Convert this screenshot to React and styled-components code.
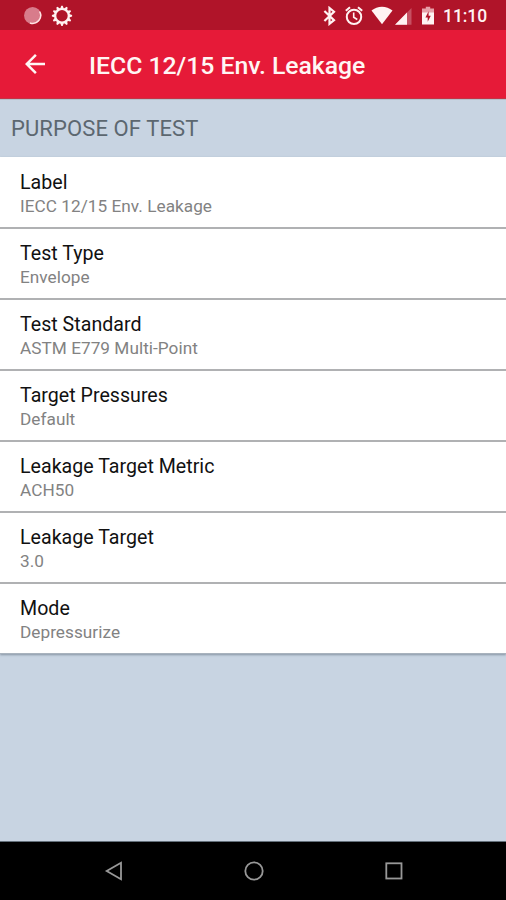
import React from 'react';
import styled, { createGlobalStyle } from 'styled-components';

const GlobalStyle = createGlobalStyle`
  * {
    box-sizing: border-box;
  }
  body {
    margin: 0;
    font-family: Roboto, "Liberation Sans", sans-serif;
  }
`;

const Screen = styled.div`
  display: flex;
  flex-direction: column;
  width: 100%;
  height: 100vh;
  overflow: hidden;
  background: #c8d4e2;
`;

const StatusBar = styled.div`
  display: flex;
  flex: none;
  align-items: center;
  height: 30px;
  padding: 1px 19px 0 23px;
  background: #b01429;
  color: #fff3f2;
`;

const StatusIcon = styled.svg`
  display: block;
  flex: none;
  width: ${props => props.$width}px;
  height: 20px;
  margin-right: ${props => props.$gap || 0}px;
`;

const Spacer = styled.div`
  flex: 1;
`;

const Clock = styled.span`
  width: 44px;
  font-size: 17.5px;
  font-weight: 500;
  line-height: 20px;
  letter-spacing: -0.05px;
  white-space: nowrap;
`;

const AppBar = styled.header`
  display: flex;
  flex: none;
  align-items: center;
  height: 69px;
  padding: 0 20px 0 20px;
  background: #e61a38;
  border-bottom: 1px solid #c33445;
  color: #fff6f4;
`;

const BackButton = styled.button`
  width: 30px;
  height: 30px;
  margin-right: 39px;
  padding: 0;
  border: 0;
  background: none;
  color: inherit;
  svg {
    display: block;
  }
`;

const Title = styled.h1`
  margin: 3px 0 0;
  font-size: 24.8px;
  font-weight: 500;
  line-height: 30px;
  letter-spacing: -0.03px;
  white-space: nowrap;
`;

const SectionTitle = styled.h2`
  flex: none;
  height: 58px;
  margin: 0;
  padding: 0 11px;
  border-top: 1px solid #b4bfcb;
  color: #5c6770;
  font-size: 22px;
  font-weight: 400;
  line-height: 57px;
  letter-spacing: 0.1px;
`;

const List = styled.ul`
  flex: none;
  margin: 0;
  padding: 1px 0 0;
  list-style: none;
  background: #fff;
  box-shadow: 0 1px 2px rgba(70, 85, 100, 0.5);
`;

const Row = styled.li`
  height: 71px;
  padding: 13px 20px 0;
  border-bottom: 2px solid #b0b1b3;
  &:last-child {
    height: 70px;
    border-bottom: 1px solid #a8b2bd;
  }
`;

const Label = styled.div`
  color: #111;
  font-size: 19.6px;
  line-height: 24px;
  letter-spacing: 0.02px;
`;

const Value = styled.div`
  margin-top: -1px;
  color: #828282;
  font-size: 17.2px;
  line-height: 25px;
  letter-spacing: 0.04px;
`;

const NavBar = styled.nav`
  display: flex;
  flex: none;
  align-items: center;
  justify-content: center;
  gap: 116px;
  height: 59px;
  margin-top: auto;
  padding-left: 1px;
  border-top: 1px solid #65717c;
  background: #000;
`;

const NavIcon = styled.svg`
  display: block;
  width: 24px;
  height: 24px;
  fill: none;
  stroke: #989898;
  stroke-width: 1.8;
`;

const settings = [
  { label: 'Label', value: 'IECC 12/15 Env. Leakage' },
  { label: 'Test Type', value: 'Envelope' },
  { label: 'Test Standard', value: 'ASTM E779 Multi-Point' },
  { label: 'Target Pressures', value: 'Default' },
  { label: 'Leakage Target Metric', value: 'ACH50' },
  { label: 'Leakage Target', value: '3.0' },
  { label: 'Mode', value: 'Depressurize' },
];

const teeth = [0, 30, 60, 90, 120, 150, 180, 210, 240, 270, 300, 330];

function StatusIcons() {
  return (
    <StatusBar>
      <StatusIcon $width={20} $gap={8} viewBox="0 0 20 20">
        <circle cx="9.6" cy="9.5" r="8.6" fill="#d87c8b" />
        <path d="M16.6 5.5A8 8 0 0 1 7 17" fill="none" stroke="#ffe3e3" strokeWidth="1.5" />
      </StatusIcon>
      <StatusIcon $width={22} viewBox="0 0 22 20" overflow="visible">
        <circle cx="11" cy="9.8" r="6.8" fill="none" stroke="currentColor" strokeWidth="2.2" />
        {teeth.map(angle => (
          <path key={angle} d="M9 3.2L10.3 -0.3H11.7L13 3.2Z" fill="currentColor" transform={`rotate(${angle} 11 9.8)`} />
        ))}
      </StatusIcon>
      <Spacer />
      {/* bluetooth */}
      <StatusIcon $width={13} $gap={9} viewBox="0 0 13 20">
        <path d="M1.4 5L11 14.2L6.5 17.8V2L11 5.7L1.4 15" fill="none" stroke="currentColor" strokeWidth="2.2" />
      </StatusIcon>
      {/* alarm */}
      <StatusIcon $width={18} $gap={8} viewBox="0 0 18 20">
        <circle cx="9" cy="10.9" r="7.2" fill="none" stroke="currentColor" strokeWidth="2" />
        <path d="M0.8 4.8L5 1.2M17.2 4.8L13 1.2" stroke="currentColor" strokeWidth="2" />
        <path d="M8.7 6.5V11.3L12.3 13.5" fill="none" stroke="currentColor" strokeWidth="1.6" />
      </StatusIcon>
      {/* wifi */}
      <StatusIcon $width={22} $gap={2} viewBox="0 0 22 20">
        <path d="M0.5 4.5C6.4 -0.6 15.6 -0.6 21.5 4.5L11 18.2Z" fill="currentColor" />
      </StatusIcon>
      {/* cell signal */}
      <StatusIcon $width={17} $gap={10} viewBox="0 0 17 20">
        <path d="M0 18.7L16.5 2V18.7Z" fill="#c65062" />
        <path d="M0 18.7L12 6.6V18.7Z" fill="currentColor" />
      </StatusIcon>
      {/* battery */}
      <StatusIcon $width={12} $gap={9} viewBox="0 0 12 20">
        <path d="M3.8 0.8H8.2V2.5H12V7H0V2.5H3.8Z" fill="#e6a0a8" />
        <path d="M0 6.5H12V18.5H0Z" fill="currentColor" />
        <path d="M6.6 5.3L3.4 11.6H5.7V15.8L8.8 9.8H6.6Z" fill="#b01429" />
      </StatusIcon>
      <Clock>11:10</Clock>
    </StatusBar>
  );
}

export default function App() {
  return (
    <>
      <GlobalStyle />
      <Screen>
        <StatusIcons />
        <AppBar>
          <BackButton aria-label="Back">
            <svg width="30" height="30" viewBox="0 0 24 24" fill="currentColor">
              <path d="M20 11H7.83l5.59-5.59L12 4l-8 8 8 8 1.41-1.41L7.83 13H20v-2z" />
            </svg>
          </BackButton>
          <Title>IECC 12/15 Env. Leakage</Title>
        </AppBar>
        <SectionTitle>PURPOSE OF TEST</SectionTitle>
        <List>
          {settings.map(item => (
            <Row key={item.label}>
              <Label>{item.label}</Label>
              <Value>{item.value}</Value>
            </Row>
          ))}
        </List>
        <NavBar>
          <NavIcon viewBox="0 0 24 24">
            <path d="M19 3.7V20.3L4.7 12Z" />
          </NavIcon>
          <NavIcon viewBox="0 0 24 24">
            <circle cx="12" cy="12" r="8.7" />
          </NavIcon>
          <NavIcon viewBox="0 0 24 24">
            <rect x="4.3" y="4.3" width="15.2" height="15.2" />
          </NavIcon>
        </NavBar>
      </Screen>
    </>
  );
}
